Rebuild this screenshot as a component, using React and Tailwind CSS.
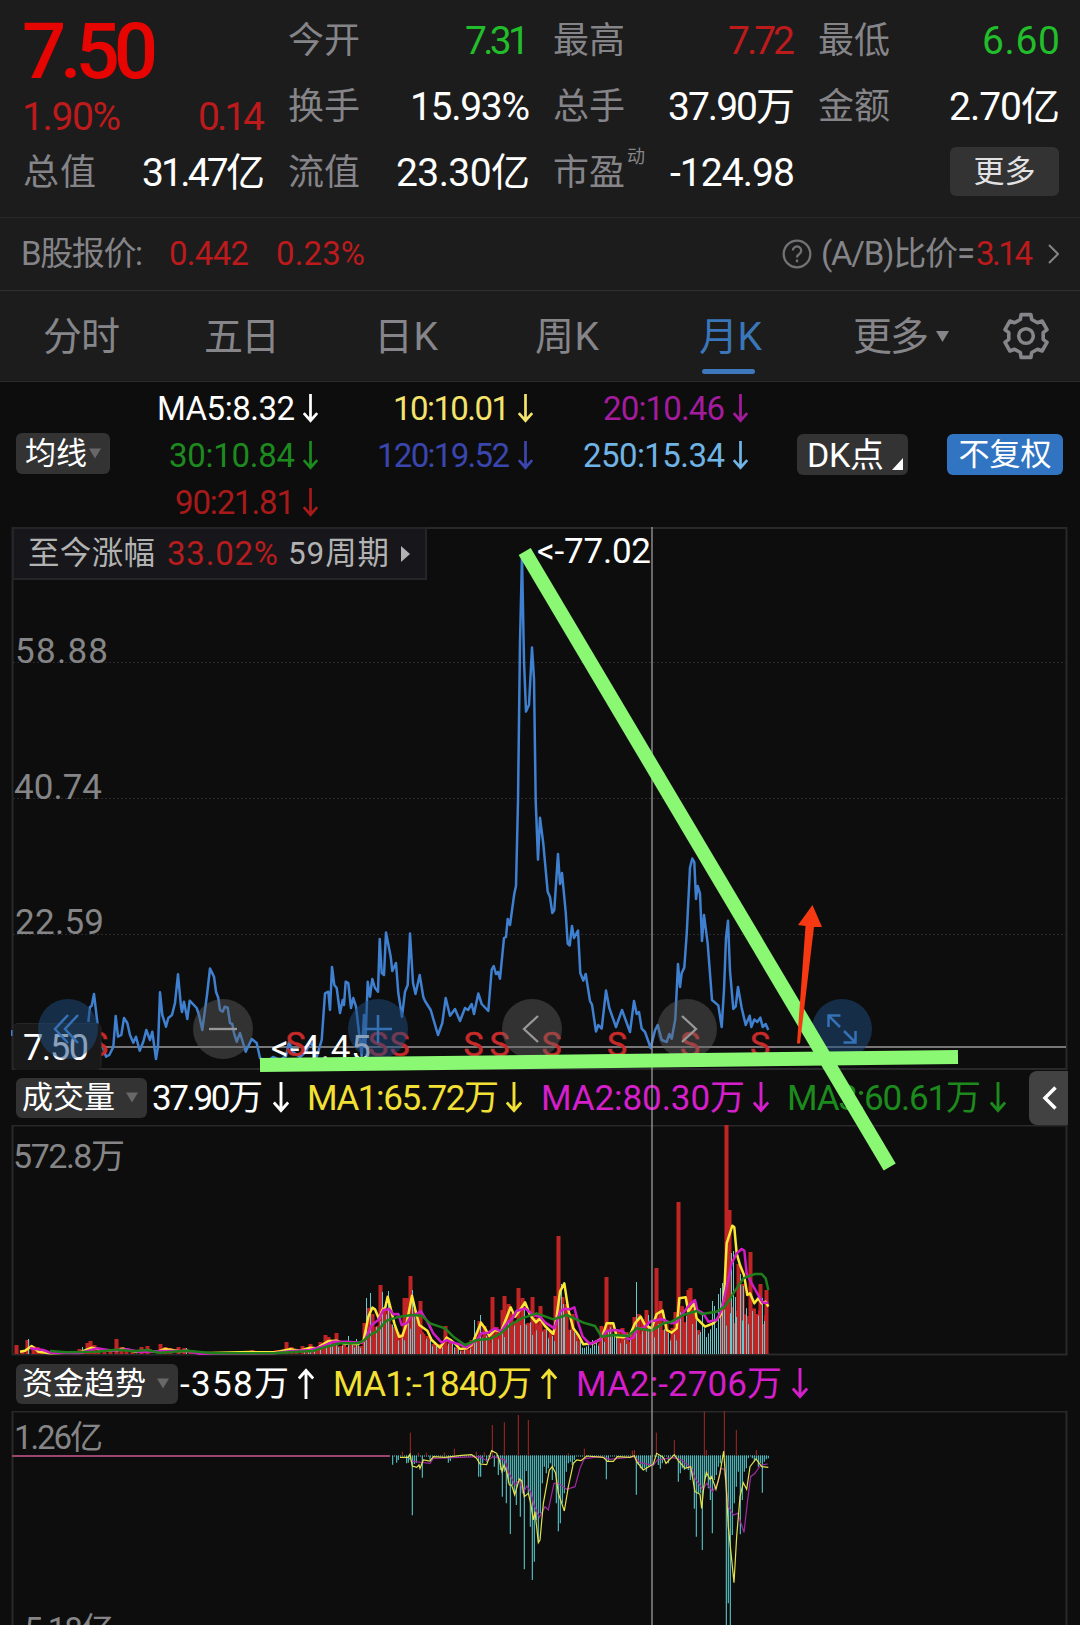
// App.jsx
import { useLayoutEffect, useRef, useState } from "react";
import clsx from "clsx";

const FONT = "font-['Roboto','Noto_Sans_CJK_SC',sans-serif]";

const QUOTES = [
  [
    { label: "今开", value: "7.31", w: 65, color: "text-[#22bd2a]" },
    { label: "换手", value: "15.93%", w: 120, color: "text-white" },
    { label: "流值", value: "23.30亿", w: 134, color: "text-white" },
  ],
  [
    { label: "最高", value: "7.72", w: 67, color: "text-[#bd1a1c]" },
    { label: "总手", value: "37.90万", w: 127, color: "text-white" },
    { label: "市盈", sup: "动", value: "-124.98", w: 125, color: "text-white" },
  ],
  [
    { label: "最低", value: "6.60", w: 78, color: "text-[#22bd2a]" },
    { label: "金额", value: "2.70亿", w: 111, color: "text-white" },
  ],
];

const AVERAGES = [
  { text: "MA5:8.32", w: 138, color: "text-white" },
  { text: "10:10.01", w: 117, color: "text-[#f4e36c]" },
  { text: "20:10.46", w: 122, color: "text-[#a41c9e]" },
  { text: "30:10.84", w: 126, color: "text-[#1d8a1f]" },
  { text: "120:19.52", w: 133, color: "text-[#3a46ad]" },
  { text: "250:15.34", w: 142, color: "text-[#70b4e6]" },
  { text: "90:21.81", w: 120, color: "text-[#a81a1a]" },
];

const PRICE =
  "88.3,1022 90,1007 91.7,1005.7 94,994 97.3,1022 99,1040 103,1048 106,1056.7 109.3,1055 113.3,1047 115.7,1016 118,1036.7 121.3,1035 124,1018 127.3,1023 130,1035 133.3,1042.7 136,1036.7 139.7,1050.7 143.3,1041.7 146.3,1030 150,1040 152.3,1031.7 156,1059 158,1046.7 160,992.3 162.3,1015 166,1026.7 168.3,1018 172,1015 175,1003 178,974.3 181,1006.7 182,1012 184,1001.7 187.3,1019 189.7,1000.7 196.7,1008 199,1015 202.3,1030 205,1010 207,995 210,968.5 214,976.7 216,991.7 218.3,998 220,1010 222.7,1011.7 224.7,1006.7 227.7,1007.7 230,1023 232.3,1024 234,1033 236.7,1041.7 240,1033 245.7,1051.7 251.7,1039 256.7,1043 260,1058 267,1062 273,1057 280,1060 286,1056 289,1041.7 293,1052 300,1057 306,1051.7 310,1041.7 313,1047 316.7,1057 321.7,1040 325,993.3 328.3,991.7 330,1010 332,967 334.3,985 336.7,988 340,1013 342.7,1000 344,1005 345.7,981.7 348.3,983 351,1008 353.3,998 356,1006.7 361.7,1056 364,1015 365.3,1046.7 367.7,981.7 370,996.7 372.3,979 375,988 378,991.7 379.7,939 381.7,973 384,975 386,932.5 390.7,956.7 392.3,971 396,963 398.3,993 402,1016.7 405,991.7 407.7,985 410,933.5 413,983 415.5,994 419.7,975 423.3,997 425,1001 430.7,1010 438,1035 442.3,1023 445.7,998 450,1015.7 455,1009 460,1021 465,1008 468,1010 471.7,1004 474,1014 478.3,993.5 481.7,1004 488.3,1011 491.7,969.5 493.7,966 496,974 498,972 500,978.7 504,938 506,937 507.7,919 510,925 514.3,893.7 516,886 518,801 520,642 522,557 524,660.6 526,711.6 529,705 532,647.6 534,679 535.7,801 538,859.6 540,817.8 543.3,843.7 547.7,891.8 550,897 552.3,913 554.3,910 558,854 560,884 562,873 565.7,912 567.7,943.6 569.7,945.5 572,926 574,938 578,930.6 580.3,973 583.3,980.6 585.7,974 590,1001 592,1004.6 596,1031.6 598.3,1025 601.7,1028.7 606,990.6 609.3,1008 616,1027 622,1010 630,1032 634,1001 636.7,1014 639,1012 641.7,1028.7 645,1032 650.7,1048 655,1030.5 657.7,1025 661.7,1040 666.7,1042 669.3,1034 671.7,1038.7 675.3,1019 678,964 680,987 681.7,973 684.3,967.6 686.7,934 690,867.8 692.3,858.5 694.3,862 696,899 697.7,886 700,893.7 702,941 704,915 707.7,943.6 712,1000 718.3,1005.4 721.7,1027 724,990 726,938 728,920.7 730,971 733.3,1009 735.7,1006.5 738,987 741.7,1008 745.7,1025 749.7,1015.7 751.3,1027 754.3,1019.5 757.3,1022 760.3,1017.6 762.7,1027 765.7,1024 768.3,1030";

const SELL_MARKS = [98, 295.5, 378, 399.5, 473.5, 499.5, 551.5, 617, 690, 760];

// volume averages, three units to a pixel
const VOL_FAST =
  "60,725 75,722 95,708 115,725 150,730 240,727 275,713 320,722 350,722 370,716 410,726 440,721 470,726 495,717 540,724 560,722 600,730 750,726 780,727 830,726 870,718 900,722 930,713 950,715 985,693 1010,692 1035,702 1050,699 1070,703 1090,695 1105,620 1117,593 1125,598 1137,627 1147,600 1156,592 1163,560 1172,595 1183,640 1197,680 1207,678 1220,640 1236,557 1246,600 1258,645 1282,662 1295,690 1320,713 1340,683 1352,690 1367,703 1380,717 1400,715 1415,705 1430,670 1443,638 1455,655 1468,678 1485,660 1503,665 1532,592 1545,620 1560,600 1575,577 1590,615 1608,637 1620,625 1635,648 1660,672 1670,620 1680,545 1693,520 1705,600 1720,655 1735,675 1750,703 1780,700 1805,685 1820,640 1840,640 1850,680 1870,682 1890,675 1905,640 1922,620 1935,645 1955,655 1970,612 1988,602 2000,660 2015,668 2030,655 2038,565 2057,562 2065,605 2082,580 2090,625 2115,650 2140,640 2162,615 2172,560 2180,400 2197,347 2203,352 2210,430 2220,465 2232,495 2242,555 2250,550 2263,580 2275,565 2285,580 2297,575 2305,590";
const VOL_MID =
  "90,715 130,720 150,728 240,729 290,715 340,722 380,718 420,726 490,723 560,723 600,731 820,730 870,724 930,720 960,712 1000,695 1040,695 1085,698 1095,690 1115,645 1135,630 1150,600 1168,597 1180,613 1195,612 1205,645 1220,640 1232,620 1245,615 1262,603 1285,640 1300,670 1325,698 1340,690 1355,697 1375,702 1400,712 1430,690 1445,670 1465,668 1485,655 1503,665 1520,640 1537,625 1550,603 1575,595 1600,615 1620,620 1635,637 1663,655 1680,605 1693,597 1710,598 1723,592 1735,640 1748,680 1770,702 1800,690 1820,663 1845,660 1868,663 1885,688 1900,683 1912,655 1930,655 1950,635 1985,627 2015,640 2030,637 2045,615 2068,585 2085,570 2092,600 2110,610 2125,635 2150,630 2165,600 2180,530 2195,460 2210,430 2225,417 2233,422 2240,490 2255,520 2272,550 2288,578 2305,578";
const VOL_SLOW =
  "150,723 200,727 290,725 350,719 400,724 440,720 480,728 560,722 640,730 740,730 830,729 880,726 940,723 980,710 1020,700 1070,700 1090,693 1110,675 1130,665 1160,632 1190,622 1235,615 1265,617 1290,640 1335,655 1360,680 1395,705 1430,690 1470,687 1500,672 1530,645 1565,625 1610,610 1660,628 1700,615 1750,638 1785,648 1805,680 1840,675 1885,678 1910,655 1955,662 1990,640 2015,635 2050,615 2090,603 2105,612 2150,605 2175,590 2200,550 2230,505 2265,492 2285,492 2297,505 2305,540";

// [x, height] of the tall bars
const VOL_UP = [
  [16, 9], [22, 3], [27, 14], [33, 8], [37, 7], [41, 3], [79, 5], [83, 3], [87, 11], [90, 13], [94, 9], [98, 6], [104, 5], [110, 4], [116, 15], [121, 7], [126, 5], [132, 3], [141, 7], [147, 8], [160, 10], [165, 7], [170, 6], [178, 7], [184, 6], [190, 3], [252, 4], [257, 3], [276, 4], [286, 12], [291, 7], [296, 5],
  [302, 8], [310, 10], [316, 6], [320, 12], [325, 19], [328, 17], [332, 14], [336, 21], [341, 8], [347, 7], [353, 9], [358, 8], [364, 31], [368, 46], [372, 40], [376, 27], [380, 69], [384, 45], [388, 44], [392, 24], [397, 22], [401, 20], [404, 56], [407, 56], [410, 78], [414, 45], [418, 28], [420, 53], [423, 20], [427, 18], [433, 10], [440, 10], [445, 28], [450, 12],
  [466, 8], [471, 14], [475, 17], [479, 33], [484, 28], [488, 15], [492, 57], [496, 27], [500, 22], [502, 44], [504, 58], [508, 50], [511, 40], [515, 30], [518, 66], [522, 56], [526, 30], [530, 27], [532, 57], [536, 36], [540, 48], [545, 25], [550, 24], [555, 58], [558, 118], [562, 57], [566, 50], [572, 40], [576, 20],
  [601, 28], [606, 77], [610, 30], [618, 24], [622, 26], [626, 22], [634, 37], [638, 40], [642, 35], [646, 44], [650, 27], [654, 30], [656, 86], [660, 53], [666, 30], [672, 26], [675, 42], [678, 152], [682, 25], [686, 30], [688, 64], [690, 66], [693, 45], [698, 24], [722, 50], [726, 229], [729, 144], [738, 90], [742, 70], [748, 38], [750, 102], [756, 40], [760, 70], [764, 30], [766, 64],
];
const VOL_DOWN = [
  [28, 15], [82, 7], [186, 6], [348, 18], [356, 15], [366, 56], [370, 61], [382, 62], [388, 63], [412, 64], [474, 34], [480, 39], [561, 70], [563, 50], [592, 14], [636, 72], [648, 39], [702, 42], [712, 53], [714, 48], [718, 60], [720, 66], [722, 71], [731, 101], [733, 103], [735, 57], [740, 80], [743, 68], [752, 43], [762, 56],
];

const FUND_DOWN =
  "38,314 50,308 55,300 80,310 85,308 90,300 97,466 103,312 109,308 127,353 150,300 205,308 211,303 296,350 302,350 308,310 320,305 343,320 355,345 361,330 367,410 373,335 379,430 385,370 391,522 397,375 403,400 409,435 415,360 421,470 427,400 433,628 439,333 445,400 451,500 457,660 463,605 469,480 475,545 481,460 487,370 493,320 499,340 505,325 511,310 517,360 523,320 529,430 535,514 541,490 547,430 553,400 559,335 565,310 571,305 577,315 583,300 679,358 685,305 769,404 775,315 781,325 787,330 793,325 799,335 805,320 811,315 835,315 841,326 847,310 865,310 895,365 901,340 907,325 913,330 919,325 925,330 931,360 937,350 943,446 949,530 955,400 961,400 967,570 973,370 979,350 985,385 991,420 997,520 1003,360 1009,345 1015,320 1021,310 1039,800 1045,730 1051,800 1057,525 1063,430 1069,380 1075,335 1081,523 1087,420 1093,335 1099,325 1105,295 1117,295 1123,305 1129,300 1135,320 1141,310 1147,398 1153,305 1159,298 1165,295";
const FUND_UP =
  "67,275 91,218 115,278 139,278 193,278 223,266 289,275 313,277 337,195 373,187 415,165 445,180 565,280 613,266 757,272 763,270 829,218 883,240 973,155 979,270 1033,152 1069,210 1129,270";
const FUND_FAST =
  "60,292 85,292 90,283 97,318 110,322 117,315 120,325 130,300 150,303 160,290 195,292 245,286 275,284 290,295 300,312 320,314 335,272 350,280 358,300 366,335 372,315 380,335 388,375 395,375 404,405 418,357 425,362 433,410 445,400 452,430 460,480 465,455 475,548 480,540 490,430 508,330 517,320 527,340 535,400 553,453 565,380 580,310 590,300 603,302 620,288 670,292 682,304 700,304 712,290 750,292 763,287 770,305 790,330 820,312 830,280 850,292 858,310 883,284 895,302 915,325 932,320 945,395 960,403 965,445 972,375 979,337 990,358 995,350 1008,388 1020,340 1031,273 1038,370 1045,500 1062,668 1070,530 1080,410 1090,368 1100,388 1110,320 1128,297 1145,320 1165,322";
const FUND_SLOW =
  "90,303 150,310 160,295 300,290 320,302 340,290 375,300 385,335 405,375 418,360 430,400 440,378 452,395 462,435 478,472 495,440 505,450 522,370 535,370 560,388 585,380 600,325 613,296 660,290 690,298 763,290 780,308 820,316 832,300 880,293 905,300 935,325 945,355 968,388 980,370 998,395 1015,365 1022,325 1033,328 1045,440 1060,465 1073,460 1092,517 1103,420 1112,350 1125,340 1142,315 1163,312";

const parse = (s) => s.split(" ").map((p) => p.split(",").map(Number));

function heightAt(points, x) {
  const i = points.findIndex((p) => p[0] >= x * 3);
  if (i < 1) return 3;
  const [x0, y0] = points[i - 1];
  const [x1, y1] = points[i];
  return (733 - (y0 + ((x * 3 - x0) / (x1 - x0)) * (y1 - y0))) / 3;
}

// Spreads its characters over a fixed width
function Fit({ w, className, children }) {
  const ref = useRef(null);
  const [gap, setGap] = useState(0);

  useLayoutEffect(() => {
    const natural = ref.current.getBoundingClientRect().width;
    setGap((w - natural) / (children.length - 1));
  }, [w, children]);

  return (
    <span className={clsx("inline-block shrink-0 whitespace-nowrap", className)} style={{ width: w }}>
      <span ref={ref} style={{ letterSpacing: gap }}>{children}</span>
    </span>
  );
}

function Arrow({ up, className }) {
  return (
    <svg className={clsx("shrink-0", className)} viewBox="0 0 16 31" fill="none" stroke="currentColor" strokeWidth="2.9">
      <path d={up ? "M8 31V2M.8 10.500l7.200-8 7.200 8" : "M8 0v29M.8 20.500l7.200 8 7.200-8"} />
    </svg>
  );
}

function Caret({ className }) {
  return (
    <svg className={clsx("shrink-0", className)} viewBox="0 0 12 10" fill="currentColor">
      <path d="M0 0h12L6 10z" />
    </svg>
  );
}

function Gear() {
  const points = [];
  for (let i = 0; i < 6; i++) {
    for (const [offset, r] of [[-19, 17.5], [-13, 22], [13, 22], [19, 17.5]]) {
      const a = ((i * 60 - 90 + offset) * Math.PI) / 180;
      points.push(`${(24 + r * Math.cos(a)).toFixed(1)},${(24 + r * Math.sin(a)).toFixed(1)}`);
    }
  }
  return (
    <svg className="h-12 w-12 text-[#85858a]" viewBox="0 0 48 48" fill="none" stroke="currentColor" strokeWidth="3.6">
      <polygon points={points.join(" ")} strokeLinejoin="round" />
      <circle cx="24" cy="24" r="7.3" />
    </svg>
  );
}

function QuoteHeader() {
  return (
    <header className="flex h-[218px] gap-[23px] border-b border-[#28282a] pl-[22px] pt-2 text-[39px] leading-[66px]">
      <div className="w-[243px]">
        <div className="flex">
          <Fit w={136} className="h-[88px] text-[78px] font-medium leading-[88px] text-[#e60500]">7.50</Fit>
        </div>
        <div className="flex h-[44px] justify-between leading-[43px] text-[#bd1a1c]">
          <Fit w={99}>1.90%</Fit>
          <Fit w={67}>0.14</Fit>
        </div>
        <div className="flex h-[66px] justify-between">
          <Fit w={73} className="pl-px text-[36px] text-[#858589]">总值</Fit>
          <Fit w={123} className="text-white">31.47亿</Fit>
        </div>
      </div>
      {QUOTES.map((column, i) => (
        <div key={i} className="w-[242px]">
          {column.map((q) => (
            <div key={q.label} className="flex h-[66px] justify-between">
              <span className="flex">
                <Fit w={72} className="text-[36px] text-[#858589]">{q.label}</Fit>
                {q.sup && <span className="ml-0.5 text-[18px] leading-[33px] text-[#858589]">{q.sup}</span>}
              </span>
              <Fit w={q.w} className={q.color}>{q.value}</Fit>
            </div>
          ))}
          {column.length < 3 && (
            <button className="ml-auto mr-px mt-[7px] block h-[49px] w-[109px] rounded-md bg-[#333334] text-[31px] leading-[48px] text-[#e2e2e4]">
              更多
            </button>
          )}
        </div>
      ))}
    </header>
  );
}

function ShareRow() {
  return (
    <div className="flex h-[73px] items-center border-b border-[#303033] pl-[21px] pr-[21px] text-[33px] leading-[70px]">
      <Fit w={122} className="text-[#858589]">B股报价:</Fit>
      <Fit w={80} className="ml-[26px] text-[#bd1a1c]">0.442</Fit>
      <Fit w={89} className="ml-[27px] text-[#bd1a1c]">0.23%</Fit>
      <svg className="ml-auto h-[30px] w-[30px] text-[#727275]" viewBox="0 0 30 30" fill="none" stroke="currentColor" strokeWidth="2.3">
        <circle cx="15" cy="15" r="13.3" />
        <path d="M10.800 11.500a4.200 4.200 0 1 1 6.300 3.700c-1.600 .9-2.100 1.500-2.100 3.300M15 20.500v2.700" />
      </svg>
      <Fit w={154} className="ml-[9px] text-[#858589]">(A/B)比价=</Fit>
      <Fit w={57} className="ml-[1px] text-[#bd1a1c]">3.14</Fit>
      <svg className="ml-[15px] h-5 w-[11px] text-[#858589]" viewBox="0 0 11 20" fill="none" stroke="currentColor" strokeWidth="2">
        <path d="M1 1l9 9-9 9" />
      </svg>
    </div>
  );
}

function Tabs() {
  return (
    <nav className="flex h-[91px] border-b border-[#2b2b2d] pl-[43px] pt-[2px] text-[39px] leading-[89px] text-[#85858a]">
      <Fit w={77}>分时</Fit>
      <Fit w={76} className="ml-[84px]">五日</Fit>
      <Fit w={64} className="ml-[94px]">日K</Fit>
      <Fit w={64} className="ml-[97px]">周K</Fit>
      <div className="relative ml-[100px] text-[#3a76ba]">
        <Fit w={63}>月K</Fit>
        <div className="absolute left-[3px] top-[76px] h-[5px] w-[53px] rounded-full bg-[#3d78ba]" />
      </div>
      <Fit w={76} className="ml-[91px]">更多</Fit>
      <Caret className="ml-[7px] mt-[38px] h-[11px] w-[13px]" />
      <div className="ml-[53px] mt-[19px]">
        <Gear />
      </div>
    </nav>
  );
}

function Averages() {
  return (
    <section className="flex h-[145px] pl-4">
      <button className="mt-[51px] flex h-[41px] w-[94px] items-center rounded-md bg-[#333334] pl-[9px] text-[31px] leading-[42px] text-white">
        均线
        <Caret className="ml-[2px] h-[11px] w-[12px] text-[#68686a]" />
      </button>
      <div className="mt-[3px] grid h-[141px] grid-cols-[208px_215px_215px] text-[33px] leading-[47px]">
        {AVERAGES.map((a) => (
          <div key={a.text} className={clsx("flex items-center justify-end", a.color)}>
            <Fit w={a.w}>{a.text}</Fit>
            <Arrow className="ml-[8px] h-[29px] w-[15px]" />
          </div>
        ))}
      </div>
      <button className="relative ml-[49px] mt-[52px] h-[41px] w-[111px] rounded-md bg-[#333334] pl-[10px] text-left text-[34px] leading-[42px] text-white">
        <Fit w={77}>DK点</Fit>
        <svg className="absolute bottom-[5px] right-[5px] h-[12px] w-[11px]" viewBox="0 0 11 12" fill="currentColor">
          <path d="M11 0v12H0z" />
        </svg>
      </button>
      <button className="ml-[39px] mt-[52px] h-[41px] w-[116px] rounded-md bg-[#3174c2] text-[31px] leading-[42px] text-white">
        不复权
      </button>
    </section>
  );
}

function PriceChart() {
  return (
    <section className="relative h-[543px]">
      <svg className="block h-full w-full" viewBox="0 527 1080 543">
        <path d="M12.500 528V1069H1066.500V528z" fill="none" stroke="#29292b" strokeWidth="2" />
        <path d="M13 662.500H1066M13 798.500H1066M13 934.500H1066" stroke="#2b2b2d" strokeDasharray="2 2" />
        <g fill="#858587" fontSize="35">
          <text x="15" y="663" textLength="93">58.88</text>
          <text x="14" y="799" textLength="88">40.74</text>
          <text x="15" y="934" textLength="89">22.59</text>
        </g>
        <path d="M101 1047H1066" stroke="#777" strokeWidth="2" />
        <path d="M12 1030v6" stroke="#3f80d0" strokeWidth="2" />
        <polyline points={PRICE} fill="none" stroke="#3f80d0" strokeWidth="2.5" strokeLinejoin="round" />
        <g fill="white" fontSize="35">
          <text x="537" y="563" textLength="114">&lt;-77.02</text>
          <text x="271" y="1060" textLength="100">&lt;-4.45</text>
        </g>
        <g fill="#c62a2a" stroke="#c62a2a" strokeWidth=".5" fontSize="34" textAnchor="middle">
          {SELL_MARKS.map((x) => (
            <text key={x} x={x} y="1056">S</text>
          ))}
        </g>
        <rect x="13" y="1023.500" width="88" height="47" rx="5" fill="#19191a" stroke="#262628" />
        <text x="23" y="1060" fontSize="36" fill="white" textLength="66">7.50</text>
        <g fill="#1f4a7c" fillOpacity=".52">
          <circle cx="68" cy="1029" r="30" />
          <circle cx="378" cy="1029" r="30" />
          <circle cx="842" cy="1029" r="30" />
        </g>
        <g fill="#666" fillOpacity=".42">
          <circle cx="223" cy="1029" r="30" />
          <circle cx="532" cy="1029" r="30" />
          <circle cx="687" cy="1029" r="30" />
        </g>
        <g fill="none" stroke="#3571b5" strokeWidth="2.500">
          <path d="M68 1015l-13 14 13 14M78 1015l-13 14 13 14" />
          <path d="M364 1029h28M378 1015v28" />
          <path d="M828.500 1027v-11.500h12M829 1016l11 11M843.500 1042.500h12V1031M855 1042l-11-11" />
        </g>
        <g fill="none" stroke="#98989a" strokeWidth="2.300">
          <path d="M209 1029h28" />
          <path d="M538 1016l-14 13 14 13" />
          <path d="M682 1016l14 13-14 13" />
        </g>
      </svg>
      <div className="absolute left-3 top-0 flex h-[53px] w-[415px] items-center border-2 border-[#252527] bg-[#17171b] pl-[14px] text-[31.5px] leading-[48px] text-[#b2b2b2]">
        <Fit w={127}>至今涨幅</Fit>
        <Fit w={111} className="ml-[12px] text-[33px] text-[#b81c1c]">33.02%</Fit>
        <Fit w={101} className="ml-[10px]">59周期</Fit>
        <svg className="ml-[12px] h-4 w-[9px]" viewBox="0 0 9 16" fill="currentColor">
          <path d="M0 0l9 8-9 8z" />
        </svg>
      </div>
    </section>
  );
}

function VolumeChart() {
  const fast = parse(VOL_FAST);
  const bars = [];
  for (let x = 304; x < 768; x += 2) {
    const k = (x * 7919) % 97;
    const down = k % 2 === 0 || (x > 697 && x < 722) || (x > 579 && x < 598) || (x > 607 && x < 617);
    bars.push({ x, down, h: Math.min(55, heightAt(fast, x)) * (0.5 + k / 240) });
  }
  return (
    <svg className="block h-[231px] w-full" viewBox="0 1125 1080 231">
      <path d="M12.500 1125.500V1354.500H1066.500V1125.500z" fill="none" stroke="#29292b" strokeWidth="2" />
      <text x="13" y="1168" fontSize="34" fill="#858587" textLength="112">572.8万</text>
      <g fill="#c12424">
        {bars.filter((b) => !b.down).map((b) => (
          <rect key={b.x} x={b.x - 2} y={1354 - b.h} width="4" height={b.h} />
        ))}
        {VOL_UP.map(([x, h]) => (
          <rect key={x} x={x - 1.5} y={1354 - h} width="4" height={h} />
        ))}
      </g>
      <g fill="#66c9cd">
        {bars.filter((b) => b.down).map((b) => (
          <rect key={b.x} x={b.x} y={1354 - b.h} width="1" height={b.h} />
        ))}
        {VOL_DOWN.map(([x, h]) => (
          <rect key={x} x={x} y={1354 - h} width="1" height={h} />
        ))}
      </g>
      <g transform="translate(0 1110) scale(.33333)" fill="none" strokeWidth="7.500" strokeLinejoin="round">
        <polyline points={VOL_FAST} stroke="#fbe836" />
        <polyline points={VOL_MID} stroke="#d01cc4" />
        <polyline points={VOL_SLOW} stroke="#1f7f1c" />
      </g>
    </svg>
  );
}

function FundChart() {
  return (
    <svg className="block h-[214px] w-full" viewBox="0 1411 1080 214">
      <path d="M12.500 1640V1411.500H1066.500V1640" fill="none" stroke="#29292b" strokeWidth="2" />
      <text x="14" y="1449" fontSize="33" fill="#858587" textLength="89">1.26亿</text>
      <text x="17" y="1641" fontSize="33" fill="#858587" textLength="97">-5.18亿</text>
      <path d="M12 1456H390" stroke="#9a4670" strokeWidth="2" />
      <path d="M392 1456H768" stroke="#66c9cd" strokeDasharray="1 1" />
      <g transform="translate(380 1360) scale(.33333)" fill="none">
        <g stroke="#58c6ca" strokeWidth="3.300">
          {parse(FUND_DOWN).map(([x, y]) => (
            <path key={x} d={`M${x} 287V${y}`} />
          ))}
        </g>
        <g stroke="#a52a25" strokeWidth="3">
          {parse(FUND_UP).map(([x, y]) => (
            <path key={x} d={`M${x} 287V${y}`} />
          ))}
        </g>
        <polyline points={FUND_SLOW} stroke="#a02aa2" strokeWidth="3.600" />
        <polyline points={FUND_FAST} stroke="#e2e24e" strokeWidth="3.600" />
      </g>
    </svg>
  );
}

// Lines drawn by the user on top of the whole page
function Annotations() {
  return (
    <svg className="pointer-events-none absolute inset-0 h-full w-full" viewBox="0 0 1080 1625">
      <path d="M652 527V1625" stroke="#a0a0a0" strokeOpacity=".7" strokeWidth="1.800" />
      <path d="M524.700 551.500L889.700 1167" stroke="#8af873" strokeWidth="14" />
      <path d="M260 1065L958 1057" stroke="#8af873" strokeWidth="14" />
      <path d="M797 1043.500L805.500 926L798 925L812.500 905L822 927L814 927L800 1043.500z" fill="#f63912" />
    </svg>
  );
}

export default function App() {
  return (
    <div className={clsx("relative h-[1625px] w-[1080px] overflow-hidden bg-[#0d0d0d]", FONT)}>
      <div className="bg-[#1c1c1c]">
        <QuoteHeader />
        <ShareRow />
        <Tabs />
      </div>
      <Averages />
      <PriceChart />

      {/* Volume */}
      <div className="flex h-[55px] items-center pl-4 text-[35px] leading-[56px] text-white">
        <button className="flex h-[40px] w-[131px] items-center rounded-md bg-[#333334] pl-[6px] text-[31px] leading-[40px]">
          成交量
          <Caret className="ml-[11px] h-[11px] w-[12px] text-[#68686a]" />
        </button>
        <Fit w={111} className="ml-[5px] pt-[2px]">37.90万</Fit>
        <Arrow className="ml-[10px] h-[31px] w-4" />
        <Fit w={192} className="ml-[18px] pt-[2px] text-[#f3e034]">MA1:65.72万</Fit>
        <Arrow className="ml-[7px] h-[31px] w-4 text-[#f3e034]" />
        <Fit w={204} className="ml-[19px] pt-[2px] text-[#d41fca]">MA2:80.30万</Fit>
        <Arrow className="ml-[8px] h-[31px] w-4 text-[#d41fca]" />
        <Fit w={194} className="ml-[18px] pt-[2px] text-[#1c8a1c]">MA3:60.61万</Fit>
        <Arrow className="ml-[9px] h-[31px] w-4 text-[#1c8a1c]" />
        <button className="ml-auto mr-[12px] flex h-[54px] w-[39px] items-center rounded-l-lg bg-[#424243] pl-[13px]">
          <svg className="h-[24px] w-[15px]" viewBox="0 0 15 24" fill="none" stroke="currentColor" strokeWidth="3.500">
            <path d="M13.500 1.500L3 12l10.500 10.500" />
          </svg>
        </button>
      </div>
      <VolumeChart />

      {/* Fund trend */}
      <div className="flex h-[55px] items-center pl-4 text-[35px] leading-[56px] text-white">
        <button className="flex h-[40px] w-[162px] items-center rounded-md bg-[#333334] pl-[6px] text-[31px] leading-[40px]">
          资金趋势
          <Caret className="ml-[11px] h-[11px] w-[12px] text-[#68686a]" />
        </button>
        <Fit w={109} className="ml-[2px] pt-[2px]">-358万</Fit>
        <Arrow up className="ml-[9px] h-[31px] w-4" />
        <Fit w={199} className="ml-[19px] pt-[2px] text-[#f3e034]">MA1:-1840万</Fit>
        <Arrow up className="ml-[9px] h-[31px] w-4 text-[#f3e034]" />
        <Fit w={206} className="ml-[19px] pt-[2px] text-[#d41fca]">MA2:-2706万</Fit>
        <Arrow className="ml-[10px] h-[31px] w-4 text-[#d41fca]" />
      </div>
      <FundChart />
      <Annotations />
    </div>
  );
}
